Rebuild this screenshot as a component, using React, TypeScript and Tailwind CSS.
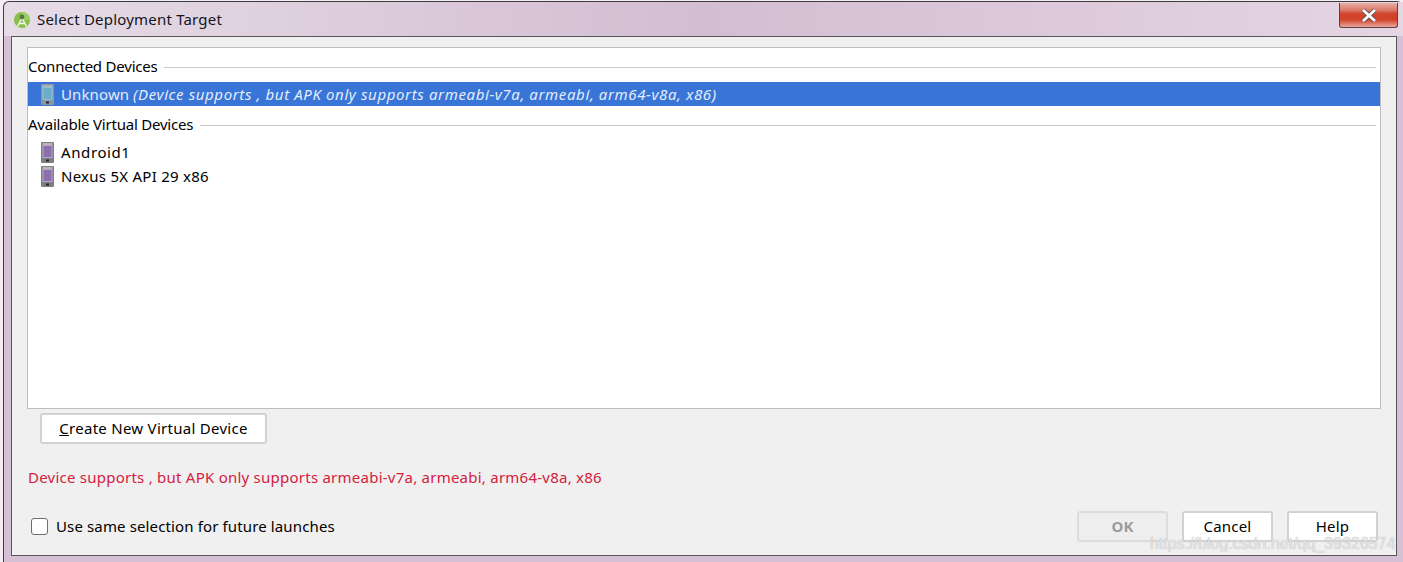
function PhoneIcon({ selected }: { selected?: boolean }) {
  return (
    <svg width="13" height="21" viewBox="0 0 13 21" className="shrink-0">
      <rect x="0" y="0" width="13" height="21" rx="1" fill={selected ? '#8a97a3' : '#7f7f82'} />
      <rect x="1.5" y="1" width="10" height="2" fill={selected ? '#a8b4bd' : '#b5b5b8'} />
      <rect x="1.5" y="3" width="10" height="13" fill={selected ? '#8cc4d8' : '#b9a6cf'} />
      <rect x="2.5" y="4" width="8" height="11" fill={selected ? '#69aecb' : '#8e6fae'} />
      <rect x="5" y="17.5" width="3" height="2" fill="#232528" />
    </svg>
  );
}

function AndroidStudioIcon() {
  return (
    <svg width="16" height="16" viewBox="0 0 16 16" className="shrink-0">
      <circle cx="8" cy="8" r="8" fill="#86c049" />
      <path d="M8 0 A8 8 0 0 1 16 8 L8 8 Z" fill="#9bcf63" />
      <path d="M8 6 L3.5 14.5 M8 6 L12.5 14.5 M4.5 11.5 H11.5" stroke="#f4f6ee" strokeWidth="1.5" fill="none" />
      <circle cx="8" cy="5" r="2.4" fill="#5d7244" />
    </svg>
  );
}

function CloseButton() {
  return (
    <div className="w-[59px] h-[25px] rounded-b-[3px] border border-t-0 border-[#6b3a40] bg-[linear-gradient(to_bottom,#eab0a6_0%,#d9796a_30%,#d2432c_45%,#d2432c_70%,#e8a89e_100%)] flex items-center justify-center shrink-0">
      <svg width="18" height="15" viewBox="0 0 18 15">
        <path d="M3 2 L15 13 M15 2 L3 13" stroke="#4c4f58" strokeWidth="4.4" />
        <path d="M3 2 L15 13 M15 2 L3 13" stroke="#ffffff" strokeWidth="2.8" />
      </svg>
    </div>
  );
}

function GroupHeader({ label, className, lineClass }: { label: string; className: string; lineClass?: string }) {
  return (
    <div className={`flex items-center gap-[7px] pr-[4px] text-black ${className}`}>
      <span className="tracking-[-0.22px]">{label}</span>
      <div className={`flex-1 h-px bg-[#c9c9c9] ${lineClass ?? ''}`} />
    </div>
  );
}

function DeviceRow({ name, className }: { name: string; className: string }) {
  return (
    <div className="flex items-center h-6 pl-[13px] gap-[7px] text-black">
      <PhoneIcon />
      <span className={className}>{name}</span>
    </div>
  );
}

function DialogButton({ children, disabled }: { children: React.ReactNode; disabled?: boolean }) {
  return (
    <div className={`w-[91px] h-[31px] rounded-[3px] border-2 flex items-center justify-center ${disabled ? 'border-[#dcdcdc] bg-[#eeeeee] text-[#9b9b9b] font-bold' : 'border-[#d2d2d2] bg-white text-black tracking-[0.2px]'}`}>
      {children}
    </div>
  );
}

export default function App() {
  return (
    <div className="relative w-[1403px] h-[562px] overflow-hidden bg-[#f4eef4] pl-[3px] pt-[1px] text-[15px] font-['Noto_Sans','Open_Sans',sans-serif]">
      <div className="w-[1400px] h-[561px] rounded-t-[6px] border-l border-t border-[#3c3c40] bg-[#d6c0d6] flex flex-col pl-[7px]">
        <div className="-ml-[7px] pl-[7px] h-[34px] flex items-start justify-between shrink-0 bg-gradient-to-r from-[#e6dce6] via-[#d3bdd2] to-[#e5d6e4] rounded-tl-[6px]">
          <div className="flex items-center gap-[7px] pl-[3px] h-[35px] text-[#15151a]">
            <AndroidStudioIcon />
            <span className="tracking-[0.2px]">Select Deployment Target</span>
          </div>
          <div className="mr-[5px] mt-[1px]">
            <CloseButton />
          </div>
        </div>

        <div className="w-[1386px] h-[520px] border border-[#55555a] bg-[#f0f0f0] flex flex-col pl-[15px] pt-[10px] shrink-0">
          <div className="w-[1354px] h-[362px] border border-[#bdbdbd] bg-white shrink-0">
            <div className="pt-[6px]">
              <GroupHeader label="Connected Devices" className="h-6 mb-[4px]" lineClass="mt-[3px]" />
              <div className="flex items-center h-6 pl-[13px] gap-[7px] bg-[#3875d7] text-[#e3ecfb]">
                <PhoneIcon selected />
                <span>
                  <span className="tracking-[0.12px]">Unknown</span>{' '}
                  <span className="italic tracking-[0.62px]">(Device supports , but APK only supports armeabi-v7a, armeabi, arm64-v8a, x86)</span>
                </span>
              </div>
              <GroupHeader label="Available Virtual Devices" className="h-6 mt-[6px] mb-[4px]" lineClass="mt-[3px]" />
              <DeviceRow name="Android1" className="tracking-[0.6px]" />
              <DeviceRow name="Nexus 5X API 29 x86" className="tracking-[0.26px]" />
            </div>
          </div>

          <div className="ml-[13px] mt-[4px] w-[227px] h-[31px] rounded-[3px] border-2 border-[#d2d2d2] bg-white flex items-center justify-center text-black shrink-0">
            <span className="tracking-[0.28px]"><span className="underline">C</span>reate New Virtual Device</span>
          </div>

          <div className="mt-[22px] ml-[1px] h-[22px] flex items-center text-[#d3213f] tracking-[0.24px]">
            Device supports , but APK only supports armeabi-v7a, armeabi, arm64-v8a, x86
          </div>

          <div className="mt-[23px] flex items-center justify-between pr-[18px]">
            <div className="flex items-center gap-[8px] pl-[4px] text-black">
              <div className="w-[17px] h-[17px] rounded-[3px] border border-[#6e6e6e] bg-white" />
              <span className="tracking-[0.13px]">Use same selection for future launches</span>
            </div>
            <div className="flex gap-[14px]">
              <DialogButton disabled>OK</DialogButton>
              <DialogButton>Cancel</DialogButton>
              <DialogButton>Help</DialogButton>
            </div>
          </div>
        </div>
      </div>

      <div className="absolute left-[1150px] top-[532px] font-['Liberation_Sans',sans-serif] text-[16px] text-white/70 [text-shadow:0_0_1px_#9a9a9a]">
        https://blog.csdn.net/qq_39326574
      </div>
    </div>
  );
}
